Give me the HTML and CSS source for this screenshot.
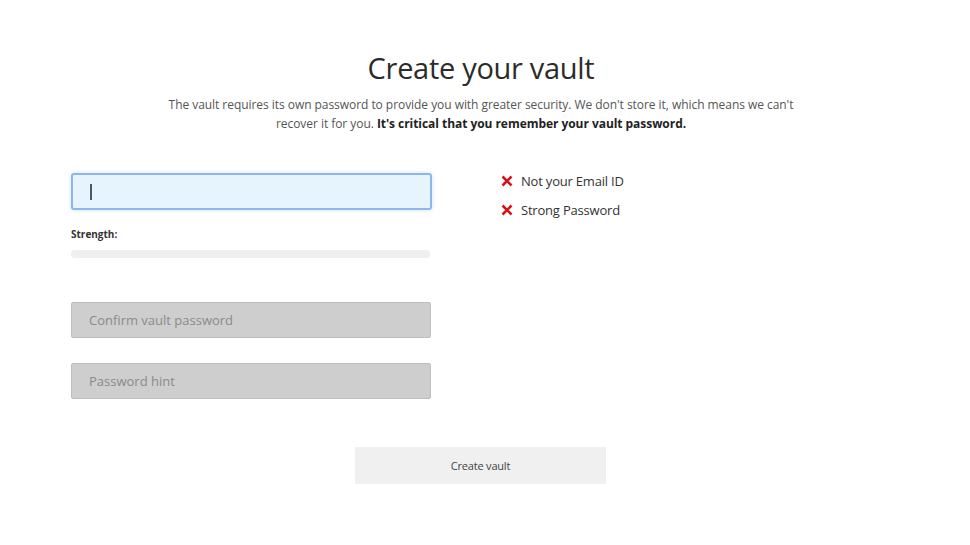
FILE: index.html
```html
<!DOCTYPE html>
<html>
<head>
<meta charset="utf-8">
<link rel="stylesheet" href="styles.css">
</head>
<body>
<div class="page">
  <header class="head">
    <h1 class="title">Create your vault</h1>
    <p class="intro">The vault requires its own password to provide you with greater security. We don't store it, which means we can't<br>recover it for you. <strong>It's critical that you remember your vault password.</strong></p>
  </header>
  <div class="form">
    <div class="col-left">
      <div class="field field-active"><span class="caret"></span></div>
      <div class="strength-label">Strength:</div>
      <div class="strength-bar"></div>
      <div class="field field-disabled">Confirm vault password</div>
      <div class="field field-disabled field-hint">Password hint</div>
    </div>
    <ul class="rules">
      <li class="rule"><svg class="x" viewBox="0 0 12 12" width="12" height="12"><path d="M1.5 1.5 L10.5 10.5 M10.5 1.5 L1.5 10.5" stroke="#d4141c" stroke-width="2.6" stroke-linecap="butt"/></svg>Not your Email ID</li>
      <li class="rule"><svg class="x" viewBox="0 0 12 12" width="12" height="12"><path d="M1.5 1.5 L10.5 10.5 M10.5 1.5 L1.5 10.5" stroke="#d4141c" stroke-width="2.6" stroke-linecap="butt"/></svg>Strong Password</li>
    </ul>
  </div>
  <div class="actions">
    <button class="btn">Create vault</button>
  </div>
</div>
</body>
</html>
```
FILE: styles.css
```css
* { box-sizing: border-box; }
html, body { margin: 0; padding: 0; background: #fff; }
body {
  width: 970px;
  height: 545px;
  overflow: hidden;
  font-family: "Open Sans", "Noto Sans", sans-serif;
  color: #333;
}
.page { padding-top: 49px; }
.head { text-align: center; padding-right: 8px; }
.title {
  margin: 0;
  font-weight: 400;
  font-size: 29px;
  line-height: 38px;
  color: #2b2b2b;
  letter-spacing: -0.3px;
}
.intro {
  margin: 8px 0 0;
  font-size: 12px;
  line-height: 19px;
  color: #555;
  letter-spacing: -0.05px;
}
.intro strong { color: #222; }
.form {
  display: flex;
  margin-top: 40px;
  padding-left: 71px;
}
.col-left { width: 361px; display: flex; flex-direction: column; }
.field {
  height: 36px;
  display: flex;
  align-items: center;
  padding-left: 17px;
  font-size: 13px;
  border-radius: 2px;
}
.field-active {
  height: 37px;
  background: #e5f4fd;
  border: 2px solid #8fb6ea;
  border-radius: 3px;
  box-shadow: 0 0 4px rgba(120, 170, 230, 0.35);
}
.caret { width: 2px; height: 16px; background: #555; }
.strength-label {
  margin-top: 17px;
  font-size: 10px;
  font-weight: 700;
  color: #333;
  line-height: 14px;
}
.strength-bar {
  margin-top: 9px;
  width: 359px;
  height: 8px;
  background: #efefef;
  border-radius: 4px;
}
.field-disabled {
  margin-top: 44px;
  width: 360px;
  background: #cecece;
  border: 1px solid #bdbdbd;
  color: #8a8a8a;
}
.field-hint { margin-top: 25px; }
.rules {
  list-style: none;
  margin: 0;
  padding: 0 0 0 69px;
}
.rule {
  display: flex;
  align-items: center;
  height: 29px;
  font-size: 13px;
  color: #333;
  letter-spacing: -0.2px;
}
.rule:first-child { margin-top: -7px; }
.x { margin-right: 8px; flex: none; }
.actions {
  display: flex;
  justify-content: center;
  margin-top: 48px;
  padding-right: 9px;
}
.btn {
  width: 251px;
  height: 37px;
  border: none;
  background: #f0f0f0;
  font-family: "Open Sans", "Noto Sans", sans-serif;
  font-size: 11px;
  color: #444;
  letter-spacing: -0.2px;
}
```
